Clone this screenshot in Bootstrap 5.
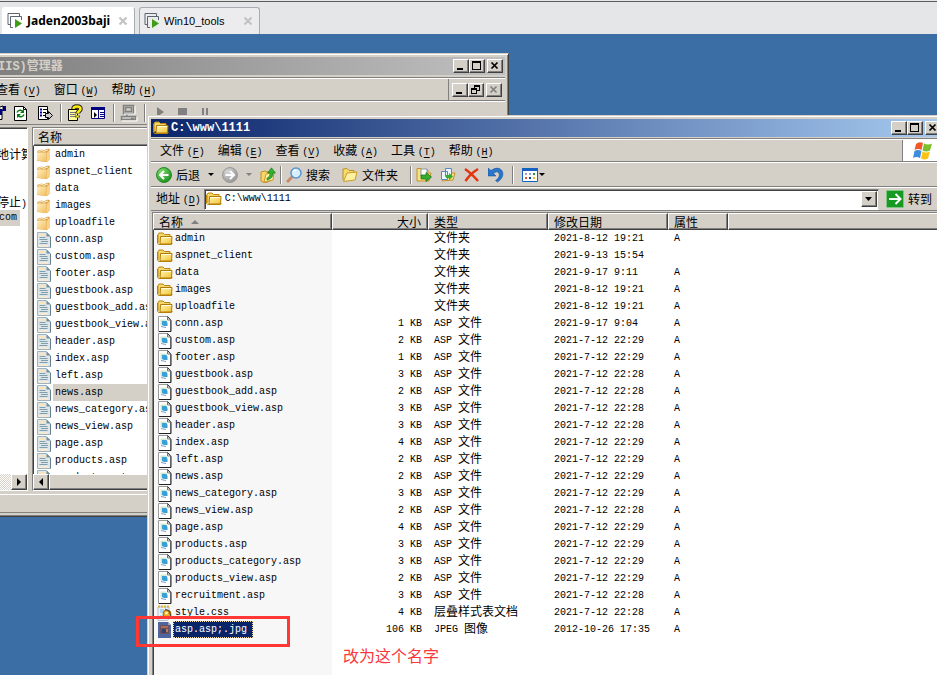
<!DOCTYPE html>
<html lang="zh-CN">
<head>
<meta charset="utf-8">
<meta name="viewport" content="width=device-width, initial-scale=1">
<title>C:\www\1111</title>
<link href="https://cdn.jsdelivr.net/npm/bootstrap@5.3.0/dist/css/bootstrap.min.css" rel="stylesheet">
<style>
body{font-family:"Noto Sans CJK SC","Liberation Sans",sans-serif;font-size:12px;line-height:16px;color:#000;background:#3a6ea5}
button{padding:0;border:0;background:none;color:inherit;line-height:16px;white-space:nowrap}
svg{display:block;flex:none}
.latin{font-family:"Liberation Mono",monospace;font-size:10px}
.zh{font-family:"Noto Sans CJK SC",sans-serif;font-size:12px;line-height:0;vertical-align:-1px}
u{text-underline-offset:2px}
/* tab strip */
.vm-tabs{height:34px;background:#e4e6e8;border-top:1px solid #e4e6e8;box-shadow:inset 0 1px #5c5c5c;padding-left:2px;gap:4px}
.vm-tab{height:27px;border:1px solid #a8abb0;border-bottom:0;border-radius:3px 3px 0 0;background:#ececee;font-family:"Liberation Sans",sans-serif;font-size:11px;padding:0 6px 0 4px;gap:4px}
.vm-tab.current{background:#fff;font-family:"Noto Sans",sans-serif;font-size:12px;font-weight:700;border-color:#fff #a8abb0 #fff #fff;width:133px}
.vm-tab.other{width:121px}
.vm-tab .shut{margin-left:auto}
/* windows */
.desk{background:#3a6ea5}
.win{background:#d4d0c8;border:1px solid;border-color:#d4d0c8 #404040 #404040 #d4d0c8;box-shadow:inset 1px 1px #fff,inset -1px -1px #808080;padding:3px}
.win-iis{left:-8px;top:19px;width:517px}
.win-exp{left:147px;right:-10px;top:81px;bottom:-12px}
.title{height:18px;padding:0 2px;flex:none}
.title-off{background:linear-gradient(90deg,#808080,#c0c0c0);color:#d4d0c8;font-weight:700}
.title-on{background:linear-gradient(90deg,#0a246a,#a6caf0);color:#fff;gap:2px}
.title .latin{font-size:12px;font-weight:700}
.cap{width:16px;height:14px;background:#d4d0c8;color:#000;border:1px solid;border-color:#fff #404040 #404040 #fff;box-shadow:inset -1px -1px #808080;display:flex;align-items:center;justify-content:center;flex:none}
.cap.sq{height:16px}
.cap-set{gap:2px}
.band{border-top:1px solid #fff;border-bottom:1px solid #808080;flex:none}
.menu{height:23px;gap:13px}
.menu>button{padding-top:2px}
.edge{border-top:1px solid #808080;margin-top:1px;flex:none}
.win-iis .edge{margin-top:2px}
.vline{width:2px;border-left:1px solid #808080;border-right:1px solid #fff;height:18px;flex:none}
.well{background:#fff;border:1px solid;border-color:#808080 #fff #fff #808080;box-shadow:inset 1px 1px #404040}
/* IIS manager */
.mdi{border-left:1px solid #808080;padding:0 3px;gap:2px;align-self:stretch}
.iis-tools{height:24px;padding-left:4px}
.iis-body{height:364px;gap:4px;margin-top:2px}
.iis-tree{width:32px}
.tree-top{padding-top:18px}
.tree-mid{height:48px;padding-top:32px}
.tree-chip{background:#d4d0c8;width:23px;padding-left:2px}
.col-head{height:18px;background:#d4d0c8;border:1px solid;border-color:#fff #404040 #404040 #fff;box-shadow:inset -1px -1px #808080;line-height:16px}
.short-list{padding-left:3px;min-height:0}
.short-row{height:17px;gap:1px}
.short-row span{flex:1;line-height:17px;padding-left:2px}
.short-row.picked span{background:#d4d0c8}
.dither{background:repeating-conic-gradient(#fff 0 25%,#d4d0c8 0 50%) 0 0/2px 2px}
.status{height:19px;margin-top:3px}
/* explorer */
.exp-menu{padding-left:9px}
.exp-tools{height:25px;padding:0 5px}
.exp-tools button{display:flex;align-items:center;gap:4px}
.exp-tools .views{gap:1px}
.exp-addr{height:24px;padding:0 11px 0 5px}
.addr-box{margin:0 7px 0 3px;height:21px;padding:0 1px 0 1px;border-right-color:#d4d0c8}
.addr-box input{border:0;outline:0;padding:0 0 0 3px;background:none;line-height:16px;min-width:0}
.flag{width:41px;background:#fff;border-left:1px solid #808080;padding-left:10px}
.exp-body{margin:1px 0 0 1px;background:linear-gradient(90deg,#f7f7f7 179px,#fff 179px)}
.files{width:100%;table-layout:fixed;border-collapse:separate;border-spacing:0}
.files th{height:17px;font-weight:400;line-height:15px;background:#d4d0c8;padding:0 6px 0 5px;border:1px solid;border-color:#fff #404040 #404040 #fff;box-shadow:inset -1px -1px #808080}
.files td{height:17px;line-height:17px;padding:0 6px;white-space:nowrap}
.files td:first-child{padding-left:4px}
.files .fname{padding:0 2px}
.files .picked{background:#0a246a;color:#fff;outline:1px dotted #f5db95;outline-offset:-1px;padding-right:6px}
.c-name{width:179px}.c-size{width:96px}.c-type,.c-date{width:120px}.c-attr{width:60px}
/* annotation */
.mark-box{left:136px;top:582px;width:154px;height:31px;border:3px solid #ff3835}
.mark-text{left:343px;top:610px;font-size:16px;line-height:22px;color:#f8383c}
</style>
<script src="https://cdn.jsdelivr.net/npm/bootstrap@5.3.0/dist/js/bootstrap.bundle.min.js"></script>
</head>
<body class="vh-100 overflow-hidden d-flex flex-column">

<svg width="0" height="0" class="position-absolute" aria-hidden="true">
<defs>
<linearGradient id="gf" x1="0" y1="0" x2="1" y2="1"><stop offset="0" stop-color="#fff7b8"/><stop offset="1" stop-color="#f2c230"/></linearGradient>
<linearGradient id="gp" x1="0" y1="0" x2="1" y2="1"><stop offset="0" stop-color="#ffeebc"/><stop offset="1" stop-color="#f0bb5c"/></linearGradient>
<radialGradient id="gg" cx=".35" cy=".3" r=".8"><stop offset="0" stop-color="#7fdc6c"/><stop offset="1" stop-color="#128a1a"/></radialGradient>
<radialGradient id="gs" cx=".35" cy=".3" r=".8"><stop offset="0" stop-color="#d8d8d8"/><stop offset="1" stop-color="#909090"/></radialGradient>
<symbol id="folder" viewBox="0 0 16 16"><path d="M1 12V3.500l1-1.500h4l1.500 1.500H13V6" fill="#f6d76a" stroke="#b8860b"/><path d="M.5 4v8l1 1.500h13l1-1" fill="none" stroke="#b8860b"/><path d="M3.500 5.500h11.500l-.5 7.500H3z" fill="url(#gf)" stroke="#b07a08"/><path d="M4.500 6.500h9.500" stroke="#fffde0"/></symbol>
<symbol id="folderp" viewBox="0 0 16 16"><path d="M1 5l1-1.500 4-1 1.500 1L12 1.500l2 1V12l-3 3-10-1z" fill="#d9a24a"/><path d="M1 5.500h9.500L11 15l-10-1.500z" fill="url(#gp)"/><path d="M11 5.500l3-3v9l-3 3.500z" fill="#f9d287"/><path d="M2.500 4.500l3.500-1 1.500 1 4.500-1.500" fill="none" stroke="#fff0c8"/></symbol>
<symbol id="asp" viewBox="0 0 16 16"><path d="M1.500.5h9l3 3v12h-12z" fill="#fff" stroke="#9a9a9a"/><path d="M10.500.5l3.500 4v11H2" fill="none" stroke="#222"/><path d="M10.500 1v3h3" fill="none" stroke="#777"/><path d="M3.500 3.500h6v6h-6z" fill="#d3e8cc"/><path d="M5 5h4.500l1 2v3H7L5 9z" fill="#3aa0d8"/><path d="M4 10.500l5 1" stroke="#7d9cc8"/></symbol>
<symbol id="doc" viewBox="0 0 16 16"><path d="M1.500.5h9l4 4v11h-13z" fill="#dfe6e8" stroke="#9db3bd"/><path d="M3 2h6v2H3z" fill="#fbe3be"/><path d="M3.500 5.500h6M3.500 7.500h8M5 9.500h7M3.500 11.500h8" stroke="#7f9fb0"/><path d="M10.500.5v4h4z" fill="#6d91a5"/><path d="M3 13h9v2H3z" fill="#f6ead6"/><path d="M14.500 5v10.500" stroke="#67808e"/></symbol>
<symbol id="css" viewBox="0 0 16 16"><path d="M1 2h11v12l-2 1.500H1z" fill="#e9f2fb" stroke="#b4bfca"/><path d="M1 1.500h12" stroke="#e0b030" stroke-width="2" stroke-dasharray="2 1"/><path d="M3 5h4M3 7h3M3 11h5" stroke="#78b0e0"/><circle cx="10" cy="9" r="4" fill="#e8a51d" stroke="#a36c08"/><circle cx="9.500" cy="8" r="1.500" fill="#fff3b0"/><path d="M8 4l4 2 2 5" fill="none" stroke="#444"/></symbol>
<symbol id="jpg" viewBox="0 0 16 16"><path d="M1 0h10l3 3v13H1z" fill="#4d66a0"/><path d="M11 0v3h3z" fill="#93a5cd"/><path d="M3 3h9v9H3z" fill="#6b5060"/><path d="M4 4h7v2H4z" fill="#aa6a58"/><path d="M5 7h4v4H5z" fill="#33416f"/><path d="M9 7h2v3H9z" fill="#b98060"/></symbol>
<symbol id="vm" viewBox="0 0 16 16"><path d="M3.500 11.500h-2.500v-11h11.500V3" fill="none" stroke="#5b6470"/><path d="M6 14.500H3.500V3.500H14.500V7" fill="none" stroke="#5b6470"/><path d="M8 6l7 4.500L8 15z" fill="#3f9c16"/></symbol>
<symbol id="min" viewBox="0 0 10 10"><path d="M1 7h6v2H1z"/></symbol>
<symbol id="max" viewBox="0 0 10 10"><path fill-rule="evenodd" d="M0 0h9v9H0zM1 2v6h7V2z"/></symbol>
<symbol id="rest" viewBox="0 0 10 10"><path fill-rule="evenodd" d="M3 0h6v6H6v3H0V3h3zM4 2v1h2v2h2V2zM1 5v3h4V5z"/></symbol>
<symbol id="x" viewBox="0 0 10 10"><path d="M1.500 1.500l6 6M7.500 1.500l-6 6" stroke="currentColor" stroke-width="1.700"/></symbol>
<symbol id="xt" viewBox="0 0 10 10"><path d="M1.500 1.500l7 7M8.500 1.500l-7 7" stroke="#c3c3c3" stroke-width="2.200"/></symbol>
</defs>
</svg>

<nav class="vm-tabs d-flex align-items-end" aria-label="虚拟机">
  <div class="vm-tab current d-flex align-items-center"><svg width="16" height="16"><use href="#vm"/></svg><span>Jaden2003baji</span><button class="shut" aria-label="关闭"><svg width="10" height="10"><use href="#xt"/></svg></button></div>
  <div class="vm-tab other d-flex align-items-center"><svg width="16" height="16"><use href="#vm"/></svg><span>Win10_tools</span><button class="shut" aria-label="关闭"><svg width="10" height="10"><use href="#xt"/></svg></button></div>
</nav>

<main class="desk flex-fill position-relative overflow-hidden">

<section class="win win-iis position-absolute">
  <header class="title title-off d-flex align-items-center"><span class="me-auto text-nowrap"><span class="latin">IIS)</span>管理器</span>
    <div class="cap-set d-flex"><div class="d-flex"><button class="cap" aria-label="最小化"><svg width="10" height="10"><use href="#min"/></svg></button><button class="cap" aria-label="最大化"><svg width="10" height="10"><use href="#max"/></svg></button></div><button class="cap" aria-label="关闭"><svg width="10" height="10"><use href="#x"/></svg></button></div>
  </header>
  <div class="edge"></div>
  <div class="band menu d-flex align-items-center">
    <button>查看 <span class="latin">(<u>V</u>)</span></button><button>窗口 <span class="latin">(<u>W</u>)</span></button><button class="me-auto">帮助 <span class="latin">(<u>H</u>)</span></button>
    <div class="mdi d-flex align-items-center"><div class="d-flex"><button class="cap" aria-label="最小化"><svg width="10" height="10"><use href="#min"/></svg></button><button class="cap" aria-label="还原"><svg width="10" height="10"><use href="#rest"/></svg></button></div><button class="cap" disabled aria-label="关闭"><svg width="10" height="10" color="#808080"><use href="#x"/></svg></button></div>
  </div>
  <div class="band iis-tools d-flex align-items-center">
    <svg width="212" height="20" viewBox="0 0 212 20" role="img" aria-label="工具栏">
      <path d="M-6 7.500h8v9h-8z" fill="#fff" stroke="#000"/><path d="M-4 6h6V3h4v5H2v4H0V8h-4z" fill="#000080"/><path d="M0 4l3-1v4" fill="#fff" stroke="#000"/>
      <path d="M14.500 3.500h9l3 3v11h-12z" fill="#fff" stroke="#000"/><path d="M23.500 3.500v3h3" fill="none" stroke="#000"/><path d="M17 9.500a3.500 3.500 0 0 1 6-1M24 11.500a3.500 3.500 0 0 1-6 1" fill="none" stroke="#087a10" stroke-width="1.500"/><path d="M24 6v4h-4zM17 15v-4h4z" fill="#087a10"/>
      <path d="M38.500 3.500h9v13h-9z" fill="#fff" stroke="#000"/><path d="M40 6.500h2M40 9.500h2M40 12.500h2" stroke="#00008b" stroke-width="2"/><path d="M43 6.500h4M43 9.500h3M43 12.500h3" stroke="#000"/><path d="M45.500 10.500h3v-2l4 4-4 4v-2h-3z" fill="#ccc" stroke="#000"/>
      <path d="M60.500 1v18" stroke="#808080"/><path d="M61.500 1v18" stroke="#fff"/>
      <path d="M68.500 6.500h9v11h-9z" fill="#ffff9a" stroke="#000"/><path d="M70 9.500h6M70 11.500h6M70 13.500h5" stroke="#777"/><path d="M73.500 6q0-2.500 3.500-2.500 3.500 0 3.500 2.500c0 2-3 2.500-3 4.500M77.500 12.500v2" fill="none" stroke="#222" stroke-width="4.500"/><path d="M73.500 6q0-2.500 3.500-2.500 3.500 0 3.500 2.500c0 2-3 2.500-3 4.500M77.500 12.500v2" fill="none" stroke="#ffea00" stroke-width="2.500"/>
      <path d="M91.500 4.500h13v11h-13z" fill="#fff" stroke="#000080"/><path d="M91 4h14v3H91z" fill="#000080"/><path d="M98.500 7v9" stroke="#000080"/><path d="M94 9l3 3-3 3z"/><path d="M100 9.500h4M100 11.500h4M100 13.500h4" stroke="#000080"/>
      <path d="M113.500 1v18" stroke="#808080"/><path d="M114.500 1v18" stroke="#fff"/>
      <path d="M123.500 2.500h10v8h-10zM125.500 4.500h6v4h-6zM121.500 13.500h14v3h-14zM127 11v2M131 15.500h3" fill="none" stroke="#808080" stroke-width="1.500"/><path d="M135 3v8h-11M137 14v4h-15" fill="none" stroke="#fff"/>
      <path d="M144.500 1v18" stroke="#808080"/><path d="M145.500 1v18" stroke="#fff"/>
      <path d="M157 4l7 5-7 5zM178 5h9v8h-9zM202 5h2v8h-2zM206 5h2v8h-2z" fill="#808080"/>
    </svg>
  </div>
  <div class="iis-body d-flex">
    <div class="well iis-tree d-flex flex-column overflow-hidden text-nowrap">
      <div class="tree-top">地计算</div><div class="tree-mid">停止<span class="latin">)</span></div><div class="latin tree-chip">com</div>
      <div class="dither mt-auto d-flex justify-content-end"><button class="cap sq" aria-label="向右滚动"><svg width="8" height="8"><path d="M2 0l4 4-4 4z"/></svg></button></div>
    </div>
    <div class="well flex-fill d-flex flex-column overflow-hidden">
      <div class="col-head ps-1 flex-shrink-0">名称</div>
      <div class="short-list flex-fill overflow-hidden" id="shortList"></div>
      <div class="dither d-flex flex-shrink-0"><button class="cap sq" aria-label="向左滚动"><svg width="8" height="8"><path d="M6 0L2 4l4 4z"/></svg></button><button class="cap sq flex-fill" aria-label="滚动条"></button></div>
    </div>
  </div>
  <div class="band status"></div>
</section>

<section class="win win-exp position-absolute d-flex flex-column">
  <header class="title title-on d-flex align-items-center"><svg width="16" height="16"><use href="#folder"/></svg><span class="latin me-auto">C:\www\1111</span>
    <div class="cap-set d-flex"><div class="d-flex"><button class="cap" aria-label="最小化"><svg width="10" height="10"><use href="#min"/></svg></button><button class="cap" aria-label="最大化"><svg width="10" height="10"><use href="#max"/></svg></button></div><button class="cap" aria-label="关闭"><svg width="10" height="10"><use href="#x"/></svg></button></div>
  </header>
  <div class="edge"></div>
  <div class="band menu exp-menu d-flex align-items-center">
    <button>文件 <span class="latin">(<u>F</u>)</span></button><button>编辑 <span class="latin">(<u>E</u>)</span></button><button>查看 <span class="latin">(<u>V</u>)</span></button><button>收藏 <span class="latin">(<u>A</u>)</span></button><button>工具 <span class="latin">(<u>T</u>)</span></button><button class="me-auto">帮助 <span class="latin">(<u>H</u>)</span></button>
    <div class="flag align-self-stretch d-flex align-items-center"><svg width="20" height="20" viewBox="0 0 20 20"><path d="M3 3q3-3 7-1L8.500 9Q5 7 1.500 9z" fill="#f0592a"/><path d="M11 2.500q4 2 8 0L17 9.500q-4 2-7.500 0z" fill="#7cc02c"/><path d="M1.500 10Q5 8 8.500 10L7 17q-3.500-2-7 0z" fill="#3b8ede"/><path d="M9.500 10.500q4 2 7.500 0l-2 7q-3.500 2-7 0z" fill="#fbc313"/></svg></div>
  </div>
  <div class="band exp-tools d-flex align-items-center">
    <button><svg width="16" height="16"><circle cx="8" cy="8" r="7.500" fill="url(#gg)" stroke="#2a8a2a"/><path d="M12.500 8H5M8 4L4 8l4 4" fill="none" stroke="#fff" stroke-width="2"/></svg>后退</button>
    <button class="ms-2 me-2" aria-label="后退历史"><svg width="6" height="4"><path d="M0 0h6L3 3z"/></svg></button>
    <button aria-label="前进"><svg width="16" height="16"><circle cx="8" cy="8" r="7.500" fill="url(#gs)" stroke="#999"/><path d="M3.500 8H11M8 4l4 4-4 4" fill="none" stroke="#fff" stroke-width="2"/></svg></button>
    <button class="ms-2 me-2" aria-label="前进历史"><svg width="6" height="4"><path d="M0 0h6L3 3z" fill="#808080"/></svg></button>
    <button class="me-1" aria-label="向上"><svg width="16" height="16"><path d="M1 5l4-1 2 1 5-1v9l-7 3-4-2z" fill="#f7d768" stroke="#c09020"/><path d="M4 15l2-8 8-2-1 8z" fill="#fff0a0" stroke="#c8982a"/><path d="M7 11c3-1 3-4 3-5H7.500L11.500.8 15.500 6H13c0 4-2 6-6 7z" fill="#33b034" stroke="#137018" stroke-width=".6"/></svg></button>
    <i class="vline me-1"></i>
    <button class="me-2 pe-1"><svg width="16" height="16"><path d="M1 15l6-6" stroke="#c98a6a" stroke-width="3"/><circle cx="10" cy="6" r="5" fill="#d5efff" stroke="#5c94cc" stroke-width="1.500"/><path d="M7 5q1-2 3-2" stroke="#fff" fill="none" stroke-width="1.500"/></svg>搜索</button>
    <button class="me-2 pe-1"><svg width="16" height="16"><path d="M1 13V2l4-.5 2 2h5v3" fill="#f7da70" stroke="#c09020"/><path d="M1.500 14.500L5 6l10-1-2 8z" fill="#fff0a2" stroke="#cb9c25"/></svg>文件夹</button>
    <i class="vline me-1"></i>
    <button class="me-2" aria-label="移至"><svg width="16" height="16"><path d="M1 14V1.500h4l1 1.500h6v3h3l-2 8z" fill="#f9df80" stroke="#c3942a"/><path d="M5 2h6v7H5z" fill="#fff" stroke="#89a"/><path d="M5 8h5V5.500L15.500 10 10 14.500V12H5z" fill="#35ab31" stroke="#14701a" stroke-width=".7"/></svg></button>
    <button class="me-2" aria-label="复制到"><svg width="16" height="16"><path d="M2 14l4-8h9l-2 7z" fill="#f9df80" stroke="#c3942a"/><path d="M1.500 4.500h6v8h-6zM5.500 1.500h6v8h-6z" fill="#edf5ff" stroke="#5a88c0"/><path d="M6 8h3V6l4 3.500L9 13v-2H6z" fill="#35ab31"/></svg></button>
    <button class="me-2" aria-label="删除"><svg width="16" height="16"><path d="M1 2q6 4 13 12M14 2Q6 7 1.500 14" fill="none" stroke="#e2340f" stroke-width="2.500"/></svg></button>
    <button class="me-1" aria-label="撤消"><svg width="16" height="16"><path d="M0 1v8h8L5.500 6.500q3-3 5-1c2 3 0 6-3 8l2 1.500c5-3 7-8 4-12Q9.500-1 3 3.500z" fill="#2875cc" stroke="#124a94" stroke-width=".5"/></svg></button>
    <i class="vline ms-1 me-2"></i>
    <button class="views" aria-label="查看"><svg width="16" height="16"><path d="M.5 1.500h15v13H.5z" fill="#fff" stroke="#1762c0"/><path d="M0 1h16v3H0z" fill="#1762c0"/><path d="M3 6h2v2H3z" fill="#a99bc8"/><path d="M7 6h2v2H7z" fill="#8aa7d0"/><path d="M11 6h2v2h-2z" fill="#25953b"/><path d="M3 10h2v2H3z" fill="#dd5431"/><path d="M7 10h2v2H7z" fill="#123d8c"/><path d="M11 10h2v2h-2z" fill="#eab62c"/></svg><svg width="6" height="4"><path d="M0 0h6L3 3z"/></svg></button>
  </div>
  <div class="band exp-addr d-flex align-items-center">
    <label for="addr" class="text-nowrap">地址 <span class="latin">(<u>D</u>)</span></label>
    <div class="well addr-box flex-fill d-flex align-items-center"><svg width="16" height="16"><use href="#folder"/></svg><input id="addr" class="latin flex-fill" value="C:\www\1111"><button class="cap sq" aria-label="地址列表"><svg width="7" height="4"><path d="M0 0h7L3.500 4z"/></svg></button></div>
    <button class="d-flex align-items-center gap-1"><svg width="18" height="18"><rect x=".5" y=".5" width="17" height="17" rx="1" fill="#169a22" stroke="#7fc583"/><path d="M3 9h11M9.500 4l5 5-5 5" fill="none" stroke="#fff" stroke-width="2"/></svg>转到</button>
  </div>
  <div class="well exp-body flex-fill overflow-hidden">
    <table class="files">
      <colgroup><col class="c-name"><col class="c-size"><col class="c-type"><col class="c-date"><col class="c-attr"><col></colgroup>
      <thead><tr><th><span class="d-flex align-items-center gap-2">名称 <svg width="8" height="4"><path d="M4 0l4 4H0z" fill="#808080"/></svg></span></th><th class="text-end">大小</th><th>类型</th><th>修改日期</th><th>属性</th><th></th></tr></thead>
      <tbody id="fileRows"></tbody>
    </table>
  </div>
</section>

<div class="mark-box position-absolute"></div>
<div class="mark-text position-absolute">改为这个名字</div>
</main>

<script>
const dir = '<span class="zh">文件夹</span>', asp = 'ASP <span class="zh">文件</span>';
const files = [
  ['admin','',dir,'2021-8-12 19:21'],['aspnet_client','',dir,'2021-9-13 15:54'],['data','',dir,'2021-9-17 9:11'],
  ['images','',dir,'2021-8-12 19:21'],['uploadfile','',dir,'2021-8-12 19:21'],
  ['conn.asp',1,asp,'2021-9-17 9:04'],['custom.asp',2,asp,'2021-7-12 22:29'],['footer.asp',1,asp,'2021-7-12 22:29'],
  ['guestbook.asp',3,asp,'2021-7-12 22:28'],['guestbook_add.asp',2,asp,'2021-7-12 22:28'],['guestbook_view.asp',3,asp,'2021-7-12 22:28'],
  ['header.asp',3,asp,'2021-7-12 22:28'],['index.asp',4,asp,'2021-7-12 22:29'],['left.asp',2,asp,'2021-7-12 22:29'],
  ['news.asp',2,asp,'2021-7-12 22:29'],['news_category.asp',3,asp,'2021-7-12 22:29'],['news_view.asp',2,asp,'2021-7-12 22:28'],
  ['page.asp',4,asp,'2021-7-12 22:29'],['products.asp',3,asp,'2021-7-12 22:29'],['products_category.asp',3,asp,'2021-7-12 22:29'],
  ['products_view.asp',2,asp,'2021-7-12 22:29'],['recruitment.asp',3,asp,'2021-7-12 22:28'],
  ['style.css',4,'<span class="zh">层叠样式表文档</span>','2021-7-12 22:28'],
  ['asp.asp;.jpg',106,'JPEG <span class="zh">图像</span>','2012-10-26 17:35']
];
const icon = n => !n.includes('.') ? 'folder' : n.endsWith('.css') ? 'css' : n.endsWith('.jpg') ? 'jpg' : 'asp';
document.getElementById('fileRows').innerHTML = files.map(([n, s, t, d]) =>
  `<tr class="latin"><td><span class="d-flex align-items-center"><svg width="16" height="16"><use href="#${icon(n)}"/></svg><span class="fname ${n.endsWith('.jpg') ? 'picked' : ''}">${n}</span></span></td><td class="text-end">${s && s + ' KB'}</td><td>${t}</td><td>${d}</td><td>${n === 'aspnet_client' ? '' : 'A'}</td><td></td></tr>`).join('');
document.getElementById('shortList').innerHTML = files.slice(0, 20).map(([n]) =>
  `<div class="short-row d-flex align-items-center latin ${n === 'news.asp' ? 'picked' : ''}"><svg width="16" height="16"><use href="#${n.includes('.') ? 'doc' : 'folderp'}"/></svg><span>${n}</span></div>`).join('');
</script>
</body>
</html>
